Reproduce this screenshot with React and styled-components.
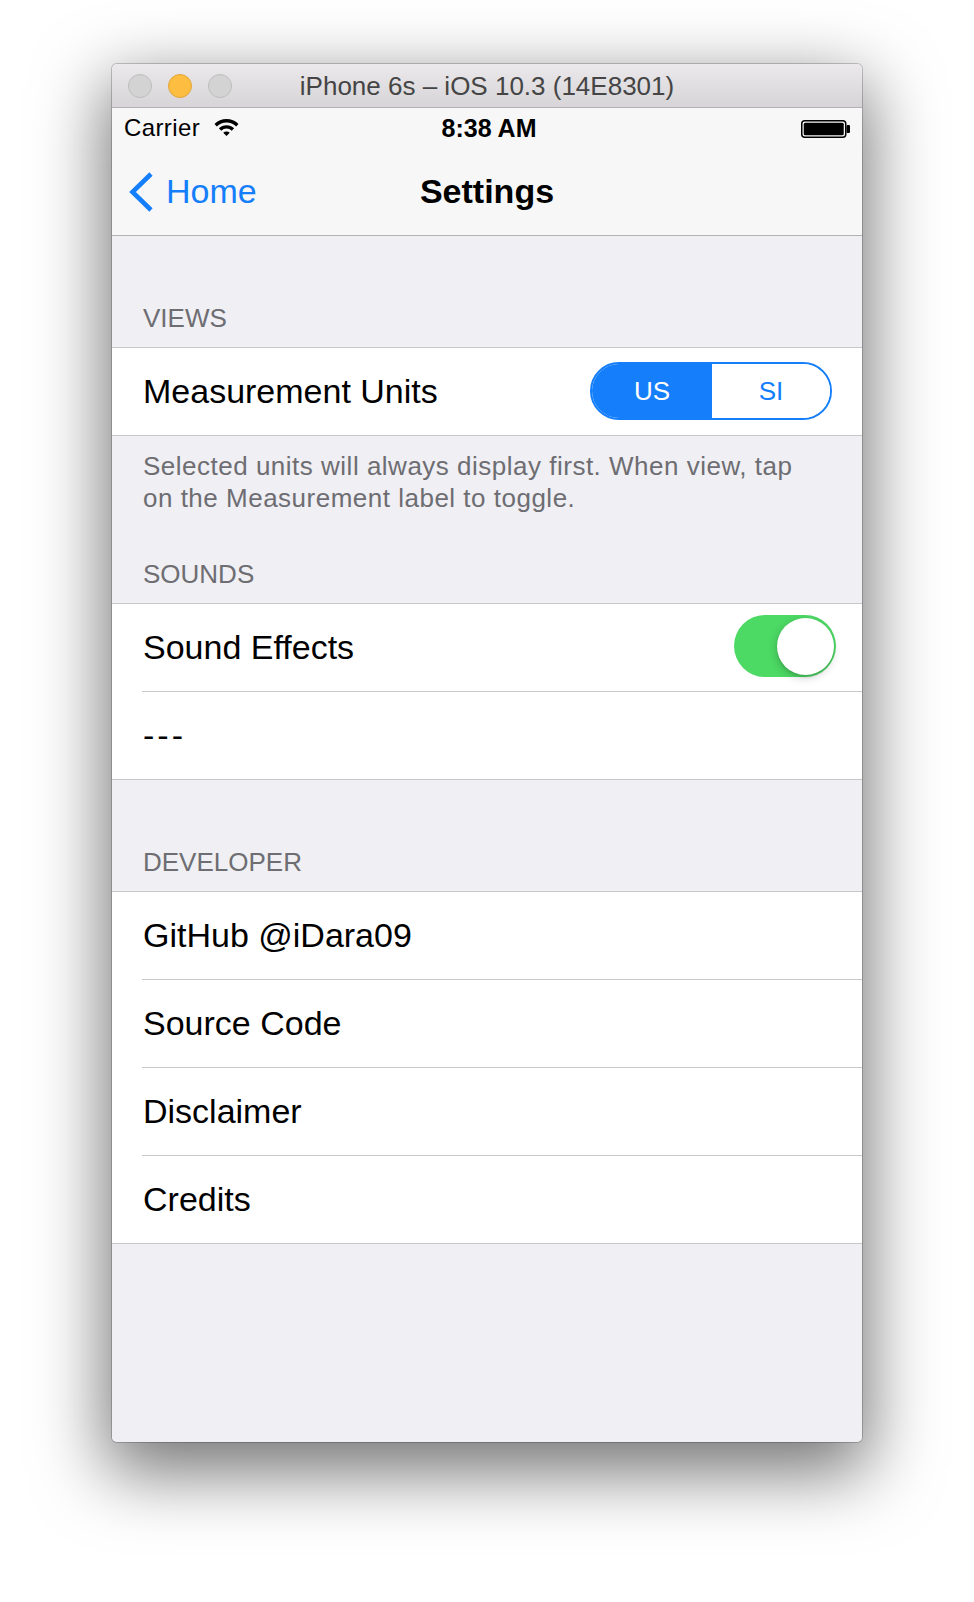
import styled, { createGlobalStyle } from "styled-components";

const GlobalStyle = createGlobalStyle`
    html, body {
        margin: 0;
        padding: 0;
        background: #ffffff;
    }
    body {
        font-family: "Liberation Sans", Arial, sans-serif;
        -webkit-font-smoothing: antialiased;
    }
    * {
        box-sizing: border-box;
    }
`;

const WifiIcon = () => (
    <svg width="25" height="17" viewBox="0 0 25 17">
        <path fill="#000" d="M0.48 4.98 A17 17 0 0 1 24.52 4.98 L22.12 7.38 A13.6 13.6 0 0 0 2.88 7.38 Z" />
        <path fill="#000" d="M4.86 9.36 A10.8 10.8 0 0 1 20.14 9.36 L17.73 11.77 A7.4 7.4 0 0 0 7.27 11.77 Z" />
        <path fill="#000" d="M12.5 17 L9.25 13.75 A4.6 4.6 0 0 1 15.75 13.75 Z" />
    </svg>
);

const BatteryIcon = () => (
    <svg width="50" height="18" viewBox="0 0 50 18">
        <rect x="0.75" y="0.75" width="44" height="16.5" rx="3" fill="none" stroke="#000" strokeWidth="1.5" />
        <rect x="2.75" y="2.75" width="40" height="12.5" rx="1.5" fill="#000" />
        <rect x="45.5" y="5" width="3.5" height="8" rx="1" fill="#000" />
    </svg>
);

const BackChevron = () => (
    <svg width="28" height="44" viewBox="0 0 28 44">
        <path d="M25 4 L6.5 22 L25 40" fill="none" stroke="#157efb" strokeWidth="4.6" strokeLinejoin="miter" />
    </svg>
);

export default function App() {
    return (
        <>
            <GlobalStyle />
            <Page>
                <Window>
                    <TitleBar>
                        <Lights>
                            <Light />
                            <Light $color="#fdbd41" $border="#e1a53a" />
                            <Light />
                        </Lights>
                        <WindowTitle>iPhone 6s – iOS 10.3 (14E8301)</WindowTitle>
                        <span />
                    </TitleBar>
                    <Screen>
                        <StatusBar>
                            <Carrier>
                                Carrier
                                <WifiIcon />
                            </Carrier>
                            <Clock>8:38 AM</Clock>
                            <Battery>
                                <BatteryIcon />
                            </Battery>
                        </StatusBar>
                        <NavBar>
                            <BackButton>
                                <BackChevron />
                                Home
                            </BackButton>
                            <NavTitle>Settings</NavTitle>
                            <span />
                        </NavBar>

                        <SectionHeader $h={111}>Views</SectionHeader>
                        <Group>
                            <Row $right={30}>
                                <RowLabel>Measurement Units</RowLabel>
                                <Segmented>
                                    <Segment $active $w={120}>US</Segment>
                                    <Segment $w={118}>SI</Segment>
                                </Segmented>
                            </Row>
                        </Group>
                        <Footer>
                            Selected units will always display first. When view, tap
                            <br />
                            on the Measurement label to toggle.
                        </Footer>

                        <SectionHeader $h={89}>Sounds</SectionHeader>
                        <Group>
                            <Row $right={26}>
                                <RowLabel>Sound Effects</RowLabel>
                                <Switch>
                                    <Knob />
                                </Switch>
                            </Row>
                            <Row>
                                <RowLabel $spacing={3}>---</RowLabel>
                            </Row>
                        </Group>

                        <SectionHeader $h={111}>Developer</SectionHeader>
                        <Group>
                            <Row><RowLabel>GitHub @iDara09</RowLabel></Row>
                            <Row><RowLabel>Source Code</RowLabel></Row>
                            <Row><RowLabel>Disclaimer</RowLabel></Row>
                            <Row><RowLabel>Credits</RowLabel></Row>
                        </Group>
                    </Screen>
                </Window>
            </Page>
        </>
    );
}

const Page = styled.div`
    width: 974px;
    height: 1602px;
    padding-top: 64px;
    display: flex;
    justify-content: center;
    align-items: flex-start;
    overflow: hidden;
`;

const Window = styled.div`
    width: 750px;
    border-radius: 5px;
    overflow: hidden;
    background: #efeff4;
    box-shadow: 0 0 0 1px rgba(0, 0, 0, 0.2), 0 24px 70px 6px rgba(0, 0, 0, 0.55);
`;

const TitleBar = styled.div`
    height: 44px;
    display: grid;
    grid-template-columns: 1fr auto 1fr;
    align-items: center;
    background: linear-gradient(#ebe9eb, #d6d4d6);
    border-bottom: 1px solid #b3b1b3;
`;

const Lights = styled.div`
    display: flex;
    gap: 16px;
    padding-left: 16px;
    padding-top: 1px;
`;

const Light = styled.span`
    width: 24px;
    height: 24px;
    border-radius: 50%;
    background: ${(p) => p.$color || "#d3d3d3"};
    border: 1px solid ${(p) => p.$border || "#bdbdbd"};
`;

const WindowTitle = styled.div`
    font-size: 26px;
    color: #454545;
    white-space: nowrap;
    padding-top: 2px;
`;

const Screen = styled.div`
    height: 1334px;
    background: #efeff4;
    display: flex;
    flex-direction: column;
`;

const StatusBar = styled.div`
    height: 40px;
    background: #f7f7f7;
    display: grid;
    grid-template-columns: 1fr auto 1fr;
    align-items: center;
    font-size: 24px;
    color: #000;
`;

const Carrier = styled.div`
    display: flex;
    align-items: center;
    gap: 14px;
    padding-left: 12px;
    letter-spacing: 0.4px;
    svg {
        margin-top: -2px;
    }
`;

const Clock = styled.div`
    font-weight: bold;
    font-size: 25px;
    padding-left: 4px;
`;

const Battery = styled.div`
    display: flex;
    justify-content: flex-end;
    padding-right: 11px;
    svg {
        margin-top: 2px;
    }
`;

const NavBar = styled.div`
    height: 88px;
    background: #f7f7f7;
    border-bottom: 1px solid #b2b2b2;
    display: grid;
    grid-template-columns: 1fr auto 1fr;
    align-items: center;
    font-size: 34px;
`;

const BackButton = styled.div`
    display: flex;
    align-items: center;
    gap: 12px;
    padding-left: 14px;
    color: #157efb;
`;

const NavTitle = styled.div`
    font-weight: bold;
    color: #000;
`;

const SectionHeader = styled.div`
    height: ${(p) => p.$h}px;
    flex-shrink: 0;
    display: flex;
    align-items: flex-end;
    padding: 0 31px 13px;
    font-size: 26px;
    line-height: 32px;
    color: #6d6d72;
    text-transform: uppercase;
`;

const Group = styled.div`
    background: #fff;
    border-top: 1px solid #c8c7cc;
    border-bottom: 1px solid #c8c7cc;
`;

const Row = styled.div`
    position: relative;
    height: 87px;
    display: flex;
    align-items: center;
    justify-content: space-between;
    padding: 0 ${(p) => p.$right || 30}px 0 31px;
    &:not(:first-child) {
        margin-top: 1px;
    }
    &:not(:first-child)::before {
        content: "";
        position: absolute;
        top: -1px;
        left: 30px;
        right: 0;
        height: 1px;
        background: #c8c7cc;
    }
`;

const RowLabel = styled.span`
    font-size: 34px;
    color: #000;
    white-space: nowrap;
    letter-spacing: ${(p) => p.$spacing || 0}px;
`;

const Footer = styled.div`
    padding: 14px 31px 0;
    font-size: 26px;
    line-height: 32px;
    color: #6d6d72;
    white-space: nowrap;
    letter-spacing: 0.5px;
`;

const Segmented = styled.div`
    display: flex;
    height: 58px;
    margin-top: -1px;
    border: 2px solid #157efb;
    border-radius: 29px;
    overflow: hidden;
`;

const Segment = styled.div`
    width: ${(p) => p.$w}px;
    display: flex;
    align-items: center;
    justify-content: center;
    font-size: 26px;
    background: ${(p) => (p.$active ? "#157efb" : "#fff")};
    color: ${(p) => (p.$active ? "#fff" : "#157efb")};
`;

const Switch = styled.div`
    position: relative;
    width: 102px;
    height: 62px;
    margin-top: -3px;
    border-radius: 31px;
    background: #4cd964;
`;

const Knob = styled.span`
    position: absolute;
    top: 2.5px;
    right: 2px;
    width: 57px;
    height: 57px;
    border-radius: 50%;
    background: #fff;
    box-shadow: -1px 3px 8px rgba(0, 0, 0, 0.18), 0 3px 1px rgba(0, 0, 0, 0.06), 0 0 0 0.5px rgba(0, 0, 0, 0.05);
`;
